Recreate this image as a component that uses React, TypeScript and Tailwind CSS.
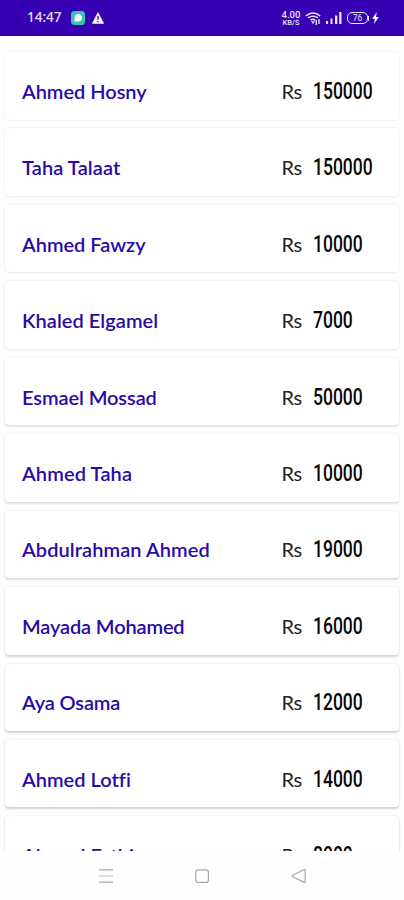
import React from 'react';

interface Customer {
  name: string;
  balance: string;
  tracking: string;
}

const customers: Customer[] = [
  { name: 'Ahmed Hosny', balance: '150000', tracking: 'tracking-[-0.03px]' },
  { name: 'Taha Talaat', balance: '150000', tracking: 'tracking-[0.1px]' },
  { name: 'Ahmed Fawzy', balance: '10000', tracking: 'tracking-[-0.02px]' },
  { name: 'Khaled Elgamel', balance: '7000', tracking: 'tracking-[0.05px]' },
  { name: 'Esmael Mossad', balance: '50000', tracking: 'tracking-[-0.08px]' },
  { name: 'Ahmed Taha', balance: '10000', tracking: 'tracking-[0.13px]' },
  { name: 'Abdulrahman Ahmed', balance: '19000', tracking: 'tracking-[0.08px]' },
  { name: 'Mayada Mohamed', balance: '16000', tracking: 'tracking-[-0.14px]' },
  { name: 'Aya Osama', balance: '12000', tracking: 'tracking-[-0.15px]' },
  { name: 'Ahmed Lotfi', balance: '14000', tracking: 'tracking-[0.02px]' },
  { name: 'Ahmed Fathi', balance: '8000', tracking: 'tracking-[0.02px]' },
];

const StatusBar: React.FC = () => (
  <header className="flex h-9 shrink-0 items-center border-b border-[#2500a0] bg-[#3700b3] pl-[27px] pr-[25px] pt-px text-[#e9e2fa]">
    <span className="w-[44px] font-['Noto_Sans',sans-serif] text-[13.5px] font-medium leading-none">14:47</span>
    <svg className="h-[14px] w-[14px]" viewBox="0 0 14 14">
      <rect width="14" height="14" rx="3.5" fill="#3bc4b4" />
      <path d="M3.6 10.8V6.8a3.7 3.7 0 1 1 3.7 3.7H5z" fill="#f2fffd" />
    </svg>
    <svg className="ml-[7px] h-3 w-3" viewBox="0 0 12 12">
      <path d="M6 .5 11.7 11.5H.3z" fill="#fff" stroke="#fff" strokeWidth=".5" strokeLinejoin="round" />
      <path d="M6 4v3.8M6 9v1.3" stroke="#3700b3" strokeWidth="1.4" />
    </svg>

    <div className="ml-auto flex items-center">
      <div className="flex w-5 flex-col items-center font-['Roboto',sans-serif] font-medium">
        <span className="text-[9.5px] leading-[8px]">4.00</span>
        <span className="text-[7.5px] leading-[7px]">KB/S</span>
      </div>
      {/* Wifi */}
      <svg className="ml-[4px] h-[13px] w-4" viewBox="0 0 16 13" fill="none" stroke="currentColor">
        <path d="M.8 4Q8-2 15.2 4M3.2 5.8Q8 2.6 12.8 5.8M5.5 8.2Q8 6.2 10.2 8.2" strokeWidth="1.5" />
        <path d="m6 9.3 2 2.7 2-2.7z" fill="currentColor" stroke="none" />
        <path d="M11.3 8v5M14 7v5" strokeWidth="1.4" />
      </svg>
      {/* Signal */}
      <svg className="ml-[5px] h-3 w-4" viewBox="0 0 16 12" fill="currentColor">
        <rect y="9" width="2" height="3" />
        <rect x="4.5" y="6.5" width="2" height="5.5" />
        <rect x="9" y="3.5" width="2.3" height="8.5" />
        <rect x="13.2" width="2.3" height="12" />
      </svg>
      {/* Battery */}
      <div className="ml-[5px] flex h-[12px] w-[21px] items-center justify-center rounded-[5px] border-[1.5px] border-current font-['Roboto',sans-serif] text-[8.5px] font-normal leading-none">
        76
      </div>
      <span className="h-[5px] w-px bg-current" />
      <svg className="ml-[3px] h-3 w-[7px]" viewBox="0 0 7 12" fill="#fff">
        <path d="M4.7 0 .2 6.7h2.6L2 12l4.8-7H4z" />
      </svg>
    </div>
  </header>
);

const CustomerCard: React.FC<{ customer: Customer; index: number }> = ({ customer, index }) => (
  // the shadow gets stronger further down the screen
  <li
    className="flex h-[67.5px] shrink-0 items-center rounded-[4px] bg-white pl-[17px] pt-[11px]"
    style={{
      boxShadow: `0 0 3px rgba(0,0,0,0.08), 0 ${0.5 + index * 0.14}px 2px rgba(0,0,0,${0.02 + index * 0.016})`,
    }}
  >
    <span className={`-mt-px w-[259.5px] whitespace-nowrap font-['Lato',sans-serif] text-[20px] font-semibold leading-none text-[#2a0aa6] ${customer.tracking}`}>
      {customer.name}
    </span>
    <span className="-mt-px w-[31.5px] font-['Lato',sans-serif] text-[20px] leading-none tracking-[-0.4px] text-[#222]">Rs</span>
    <span className="-mt-px origin-left scale-x-[0.73] font-['Roboto',sans-serif] text-[24px] font-medium leading-none text-[#080808]">
      {customer.balance}
    </span>
  </li>
);

const NavBar: React.FC = () => (
  <nav className="flex h-[49px] shrink-0 items-start justify-between bg-[#fefefe] pl-[99px] pr-[97px] pt-[17px]">
    <svg className="h-4 w-[14px]" viewBox="0 0 14 16" stroke="#a8a8a8" strokeWidth="1.2">
      <path d="M0 1.8h14M0 14.2h14" />
      <path d="M0 8h14" stroke="#c4c4c4" />
    </svg>
    <svg className="h-4 w-4" viewBox="0 0 16 16" fill="none" stroke="#a8a8a8" strokeWidth="1.2">
      <rect x="1.8" y="1.8" width="12.6" height="12.6" rx="2.2" />
    </svg>
    <svg className="h-4 w-4" viewBox="0 0 16 16" fill="none" stroke="#a8a8a8" strokeWidth="1.2">
      <path d="M1.6 7.3 12.7 1.8q1.5-.5 1.5 1v10.5q0 1.4-1.5.8L1.6 8.7q-1.1-.7 0-1.4z" />
    </svg>
  </nav>
);

const App: React.FC = () => {
  return (
    <div className="flex h-[900px] w-[404px] flex-col overflow-hidden bg-[#fefefe]">
      <StatusBar />
      <main className="min-h-0 flex-1 overflow-hidden bg-[#fefefe]">
        <ul className="flex flex-col gap-[8.95px] px-[5px] pt-4">
          {customers.map((customer, index) => (
            <CustomerCard key={customer.name} customer={customer} index={index} />
          ))}
        </ul>
      </main>
      <NavBar />
    </div>
  );
};

export default App;
